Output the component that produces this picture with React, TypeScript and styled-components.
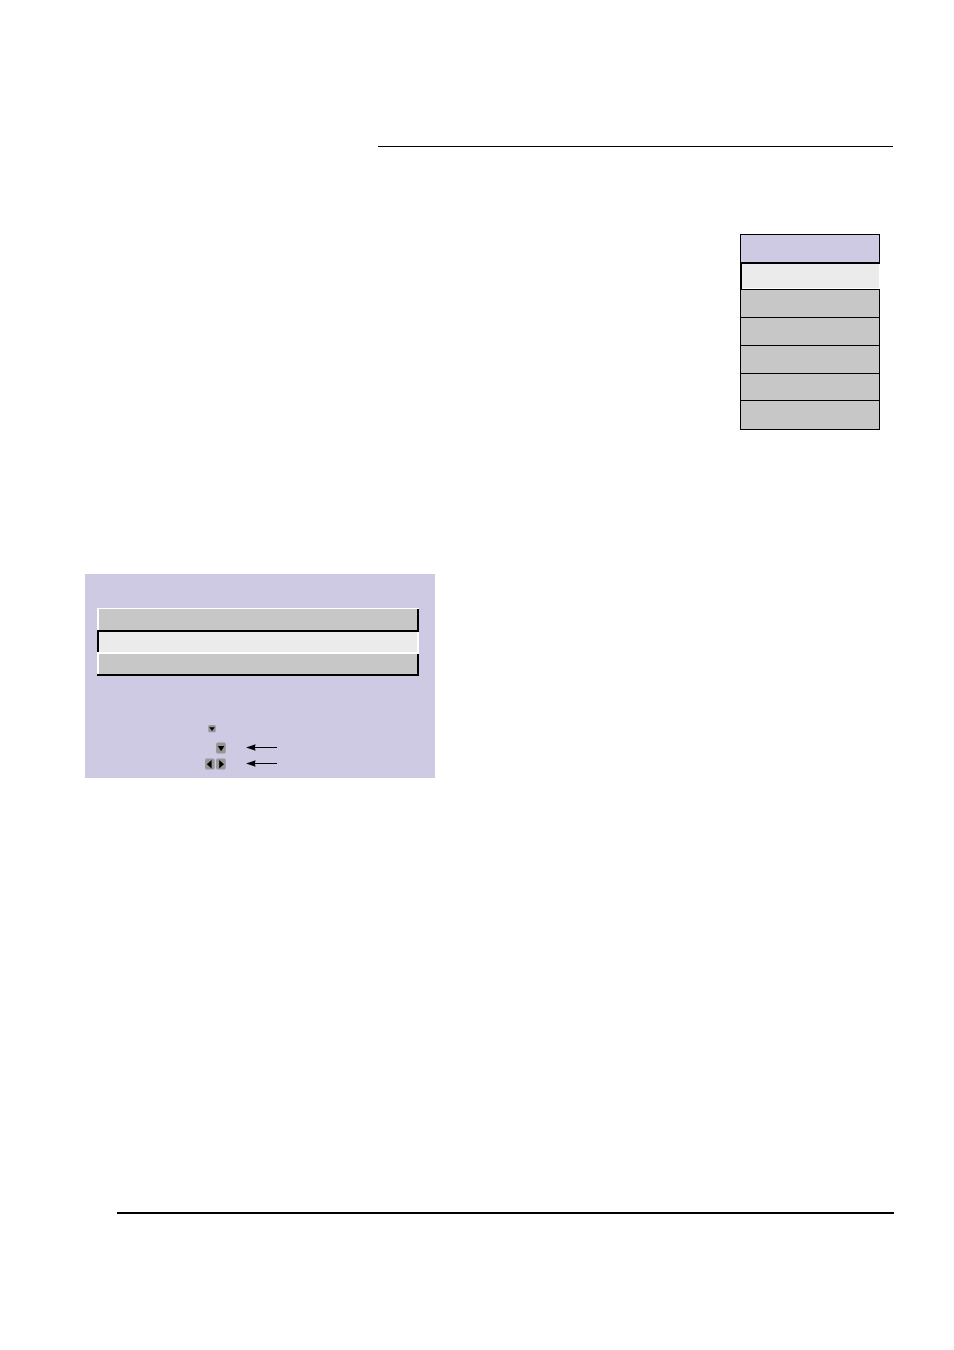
import React from "react";
import styled, { createGlobalStyle } from "styled-components";

const GlobalStyle = createGlobalStyle`
  body {
    margin: 0;
    background: #fff;
    font-family: "Liberation Sans", sans-serif;
  }
  *, *::before, *::after { box-sizing: border-box; }
`;

const Page = styled.main`
  display: flex;
  flex-direction: column;
  padding: 146px 60px 136px 85px;
`;

const HeaderRule = styled.hr`
  align-self: stretch;
  height: 1px;
  margin: 0 1px 87px 293px;
  border: 0;
  background: #000;
`;

const FooterRule = styled.hr`
  align-self: stretch;
  height: 2px;
  margin: 434px 0 0 32px;
  border: 0;
  background: #000;
`;

const Menu = styled.nav`
  align-self: flex-end;
  display: flex;
  flex-direction: column;
  width: 140px;
  margin: 0 14px 144px 0;
`;

const MenuTitle = styled.div`
  height: 29px;
  border: 1px solid #000;
  background: #cecae3;
`;

const MenuItem = styled.button<{ $height?: number }>`
  height: ${({ $height = 28 }) => $height}px;
  padding: 0;
  border: 1px solid #000;
  border-top: 0;
  border-radius: 0;
  background: #c7c7c7;
`;

const SelectedMenuItem = styled(MenuItem)`
  border-width: 1px 0 1px 2px;
  border-style: solid;
  border-color: #000;
  background: #ebebeb;
  box-shadow: inset 0 -1px #fff, inset -1px 0 #fff;
`;

const Panel = styled.section`
  display: flex;
  flex-direction: column;
  width: 350px;
  padding: 34px 16px 8px 12px;
  background: #cecae3;
`;

const Option = styled.button<{ $first?: boolean; $selected?: boolean }>`
  height: ${({ $first }) => ($first ? 24 : 22)}px;
  padding: 0;
  border: 0;
  border-radius: 0;
  background: ${({ $selected }) => ($selected ? "#ebebeb" : "#c7c7c7")};
  box-shadow: ${({ $first, $selected }) =>
    $selected
      ? "inset 0 -2px #fff, inset -2px 0 #fff, inset 2px 0 #000"
      : `inset 0 ${$first ? 1 : 0}px #fff, inset 0 -2px #000, inset 2px 0 #fff, inset -2px 0 #000`};
`;

const Hints = styled.div`
  display: flex;
  flex-direction: column;
  gap: 4px;
  padding: 49px 0 0 108px;
`;

const HintRow = styled.div`
  display: flex;
  align-items: flex-start;
  gap: 20px;
`;

const ScrollHint = styled(HintRow)`
  height: 13px;
  padding-left: 3px;
`;

const Keys = styled.div`
  display: flex;
  justify-content: flex-end;
  gap: 1px;
  width: 21px;
`;

const Key = styled.button`
  display: flex;
  padding: 0;
  border: 0;
  background: none;
`;

const ArrowLine = styled.svg`
  margin-top: 2px;
`;

const points = {
  down: "1.8,4 8.4,4 5.1,9.3",
  left: "6.6,2 6.6,10.4 1.8,6.2",
  right: "3.2,2 3.2,10.4 8,6.2",
};

function KeyButton({ direction }: { direction: keyof typeof points }) {
  return (
    <Key aria-label={direction}>
      <svg width="10" height="12" viewBox="0 0 10 12" aria-hidden="true">
        <rect x="0.1" y="0.6" width="9.6" height="10.8" rx="1.6" fill="#969696" />
        <polygon points={points[direction]} fill="#000" />
      </svg>
    </Key>
  );
}

function SmallKeyButton() {
  return (
    <Key aria-label="scroll down">
      <svg width="8" height="8" viewBox="0 0 8 8" aria-hidden="true">
        <rect x="0.3" y="0.1" width="7.4" height="7.2" rx="1.2" fill="#969696" />
        <polygon points="1.2,2.2 6.9,2.2 4.1,5.9" fill="#000" />
      </svg>
    </Key>
  );
}

function Arrow() {
  return (
    <ArrowLine width="31" height="7" viewBox="0 0 31 7" aria-hidden="true">
      <path d="M7 3.5H31" stroke="#000" strokeWidth="1" />
      <path d="M0 3.5L9.6 0.3L8.8 3.5L9.6 6.7Z" fill="#000" />
    </ArrowLine>
  );
}

export default function App() {
  return (
    <>
      <GlobalStyle />
      <Page>
        <HeaderRule />
        <Menu>
          <MenuTitle />
          <SelectedMenuItem $height={27} aria-label="Item 1" />
          <MenuItem aria-label="Item 2" />
          <MenuItem aria-label="Item 3" />
          <MenuItem aria-label="Item 4" />
          <MenuItem $height={27} aria-label="Item 5" />
          <MenuItem $height={29} aria-label="Item 6" />
        </Menu>
        <Panel>
          <Option $first aria-label="Option 1" />
          <Option $selected aria-label="Option 2" />
          <Option aria-label="Option 3" />
          <Hints>
            <ScrollHint>
              <SmallKeyButton />
            </ScrollHint>
            <HintRow>
              <Keys>
                <KeyButton direction="down" />
              </Keys>
              <Arrow />
            </HintRow>
            <HintRow>
              <Keys>
                <KeyButton direction="left" />
                <KeyButton direction="right" />
              </Keys>
              <Arrow />
            </HintRow>
          </Hints>
        </Panel>
        <FooterRule />
      </Page>
    </>
  );
}
